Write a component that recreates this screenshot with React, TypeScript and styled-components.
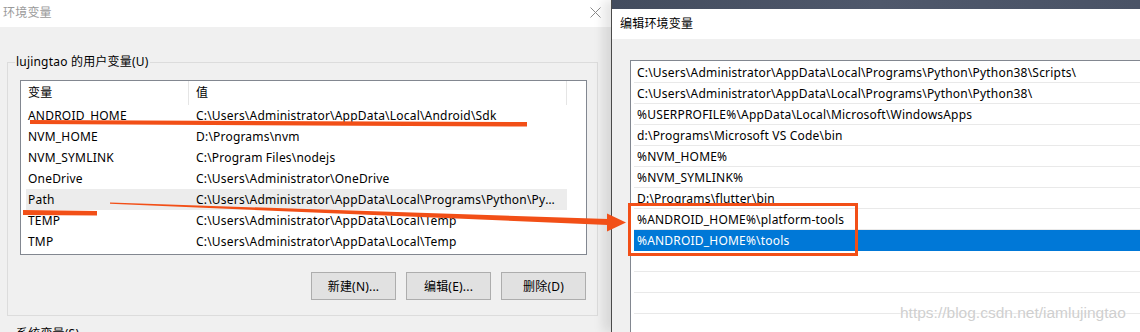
import React from "react";
import styled, { createGlobalStyle } from "styled-components";

const GlobalStyle = createGlobalStyle`
  html, body {
    margin: 0;
    padding: 0;
    background: #f0f0f0;
  }
  * {
    box-sizing: border-box;
  }
`;

const FONT = `"Noto Sans", "Noto Sans CJK SC", sans-serif`;
const MARK = "#f24f17";

interface EnvVar {
  name: string;
  value: string;
}

const userVars: EnvVar[] = [
  { name: "ANDROID_HOME", value: "C:\\Users\\Administrator\\AppData\\Local\\Android\\Sdk" },
  { name: "NVM_HOME", value: "D:\\Programs\\nvm" },
  { name: "NVM_SYMLINK", value: "C:\\Program Files\\nodejs" },
  { name: "OneDrive", value: "C:\\Users\\Administrator\\OneDrive" },
  {
    name: "Path",
    value: "C:\\Users\\Administrator\\AppData\\Local\\Programs\\Python\\Python38\\Scripts\\;C:\\Users",
  },
  { name: "TEMP", value: "C:\\Users\\Administrator\\AppData\\Local\\Temp" },
  { name: "TMP", value: "C:\\Users\\Administrator\\AppData\\Local\\Temp" },
];

const pathEntries: string[] = [
  "C:\\Users\\Administrator\\AppData\\Local\\Programs\\Python\\Python38\\Scripts\\",
  "C:\\Users\\Administrator\\AppData\\Local\\Programs\\Python\\Python38\\",
  "%USERPROFILE%\\AppData\\Local\\Microsoft\\WindowsApps",
  "d:\\Programs\\Microsoft VS Code\\bin",
  "%NVM_HOME%",
  "%NVM_SYMLINK%",
  "D:\\Programs\\flutter\\bin",
  "%ANDROID_HOME%\\platform-tools",
  "%ANDROID_HOME%\\tools",
  "",
  "",
  "",
  "",
];

const Canvas = styled.div`
  position: relative;
  width: 1140px;
  height: 332px;
  overflow: hidden;
  display: flex;
  font-family: ${FONT};
  font-size: 12px;
  letter-spacing: 0.2px;
  color: #000;
`;

const LeftWindow = styled.section`
  width: 611px;
  flex-shrink: 0;
  display: flex;
  flex-direction: column;
  background: #f0f0f0;
`;

const TitleBar = styled.header<{ $inactive?: boolean; $height: number }>`
  height: ${(p) => p.$height}px;
  flex-shrink: 0;
  background: #fff;
  display: flex;
  align-items: center;
  justify-content: space-between;
  padding: 0 10px 0 ${(p) => (p.$inactive ? 3 : 8)}px;
  color: ${(p) => (p.$inactive ? "#9a9a9a" : "#000")};
  line-height: 1;
  padding-bottom: ${(p) => (p.$inactive ? 2 : 0)}px;
`;

const CloseIcon = () => (
  <svg width="11" height="11" viewBox="0 0 11 11">
    <path d="M0.5 0.5 L10.5 10.5 M10.5 0.5 L0.5 10.5" stroke="#8a8a8a" strokeWidth="1" />
  </svg>
);

const Body = styled.div`
  flex: 1;
  display: flex;
  flex-direction: column;
`;

const Group = styled.fieldset`
  margin: 27px 13px 0 7px;
  padding: 0 10px 15px 12px;
  border: 1px solid #dcdcdc;
  min-width: 0;
`;

const Legend = styled.legend`
  margin-left: -5px;
  padding: 0 1px;
  line-height: 16px;
`;

const ListView = styled.div`
  margin-top: 10px;
  height: 175px;
  background: #fff;
  border: 1px solid #828790;
  overflow: hidden;
`;

const HeaderRow = styled.div`
  display: grid;
  grid-template-columns: 168px 378px 1fr;
  height: 24px;
`;

const HeaderCell = styled.div<{ $divider?: boolean }>`
  padding-left: 7px;
  line-height: 24px;
  border-right: ${(p) => (p.$divider ? "1px solid #e5e5e5" : "none")};
`;

const DataRow = styled.div<{ $hover?: boolean }>`
  display: grid;
  grid-template-columns: 163px 378px;
  width: 541px;
  margin-left: 5px;
  height: 21px;
  line-height: 22px;
  background: ${(p) => (p.$hover ? "#ececec" : "transparent")};
`;

const Cell = styled.div<{ $pad: number }>`
  padding-left: ${(p) => p.$pad}px;
  white-space: nowrap;
  overflow: hidden;
  text-overflow: ellipsis;
  padding-right: 8px;
`;

const ButtonRow = styled.div`
  display: flex;
  justify-content: flex-end;
  gap: 10px;
  margin-top: 17px;
  padding-right: 1px;
`;

const WinButton = styled.button`
  width: 85px;
  height: 28px;
  background: #e1e1e1;
  border: 1px solid #adadad;
  font-family: ${FONT};
  font-size: 12px;
  letter-spacing: 0.2px;
  color: #000;
  padding: 0;
`;

const SectionLabel = styled.div`
  margin: 10px 0 0 16px;
  line-height: 16px;
`;

const RightWindow = styled.section`
  flex: 1;
  display: flex;
  flex-direction: column;
  border-left: 1px solid #4a4a4a;
  box-shadow: -8px 0 10px rgba(0, 0, 0, 0.1);
  background: #f0f0f0;
  z-index: 1;
`;

const Desktop = styled.div`
  height: 9px;
  flex-shrink: 0;
  background: linear-gradient(90deg, #434c5e, #4f586b 50%, #4a5366);
`;

const EditBody = styled.div`
  flex: 1;
  padding: 21px 0 0 18px;
`;

const PathList = styled.div`
  height: 100%;
  background: #fff;
  border-top: 1px solid #828790;
  border-left: 1px solid #828790;
  padding: 1px 0 0 3px;
`;

const PathRow = styled.div<{ $selected?: boolean }>`
  height: 21px;
  line-height: 21px;
  padding-left: 3px;
  border-bottom: 1px solid ${(p) => (p.$selected ? "#0078d7" : "#e9e9e9")};
  background: ${(p) => (p.$selected ? "#0078d7" : "#fff")};
  color: ${(p) => (p.$selected ? "#fff" : "#000")};
  white-space: nowrap;
`;

const Marks = styled.svg`
  position: absolute;
  left: 0;
  top: 0;
  pointer-events: none;
  z-index: 2;
`;

const Watermark = styled.div`
  position: absolute;
  left: 900px;
  top: 304px;
  font-family: "Liberation Sans", Arial, sans-serif;
  font-size: 15.5px;
  letter-spacing: 0;
  color: #cfcfcf;
  text-shadow: 0 0 2px #fff;
  z-index: 2;
`;

const App: React.FC = () => {
  return (
    <>
      <GlobalStyle />
      <Canvas>
        <LeftWindow>
          <TitleBar $inactive $height={27}>
            <span>环境变量</span>
            <CloseIcon />
          </TitleBar>
          <Body>
            <Group>
              <Legend>lujingtao 的用户变量(U)</Legend>
              <ListView>
                <HeaderRow>
                  <HeaderCell $divider>变量</HeaderCell>
                  <HeaderCell $divider>值</HeaderCell>
                  <HeaderCell />
                </HeaderRow>
                {userVars.map((v) => (
                  <DataRow key={v.name} $hover={v.name === "Path"}>
                    <Cell $pad={2}>{v.name}</Cell>
                    <Cell $pad={7}>{v.value}</Cell>
                  </DataRow>
                ))}
              </ListView>
              <ButtonRow>
                <WinButton>新建(N)...</WinButton>
                <WinButton>编辑(E)...</WinButton>
                <WinButton>删除(D)</WinButton>
              </ButtonRow>
            </Group>
            <SectionLabel>系统变量(S)</SectionLabel>
          </Body>
        </LeftWindow>

        <RightWindow>
          <Desktop />
          <TitleBar $height={30}>
            <span>编辑环境变量</span>
          </TitleBar>
          <EditBody>
            <PathList>
              {pathEntries.map((p, i) => (
                <PathRow key={i} $selected={i === 8}>
                  {p}
                </PathRow>
              ))}
            </PathList>
          </EditBody>
        </RightWindow>

        <Marks width="1140" height="332" viewBox="0 0 1140 332">
          <polygon points="30,120 527,122 527,126.5 30,124" fill={MARK} />
          <polygon points="23,210 97,211 97,215.5 23,215" fill={MARK} />
          <polygon points="110,202.6 608,219 608,225 110,203.8" fill={MARK} />
          <polygon points="607,213.5 626,222.5 607,231.5" fill={MARK} />
          <rect x="629.5" y="204.5" width="227" height="50" fill="none" stroke={MARK} strokeWidth="3" />
        </Marks>
        <Watermark>https://blog.csdn.net/iamlujingtao</Watermark>
      </Canvas>
    </>
  );
};

export default App;
